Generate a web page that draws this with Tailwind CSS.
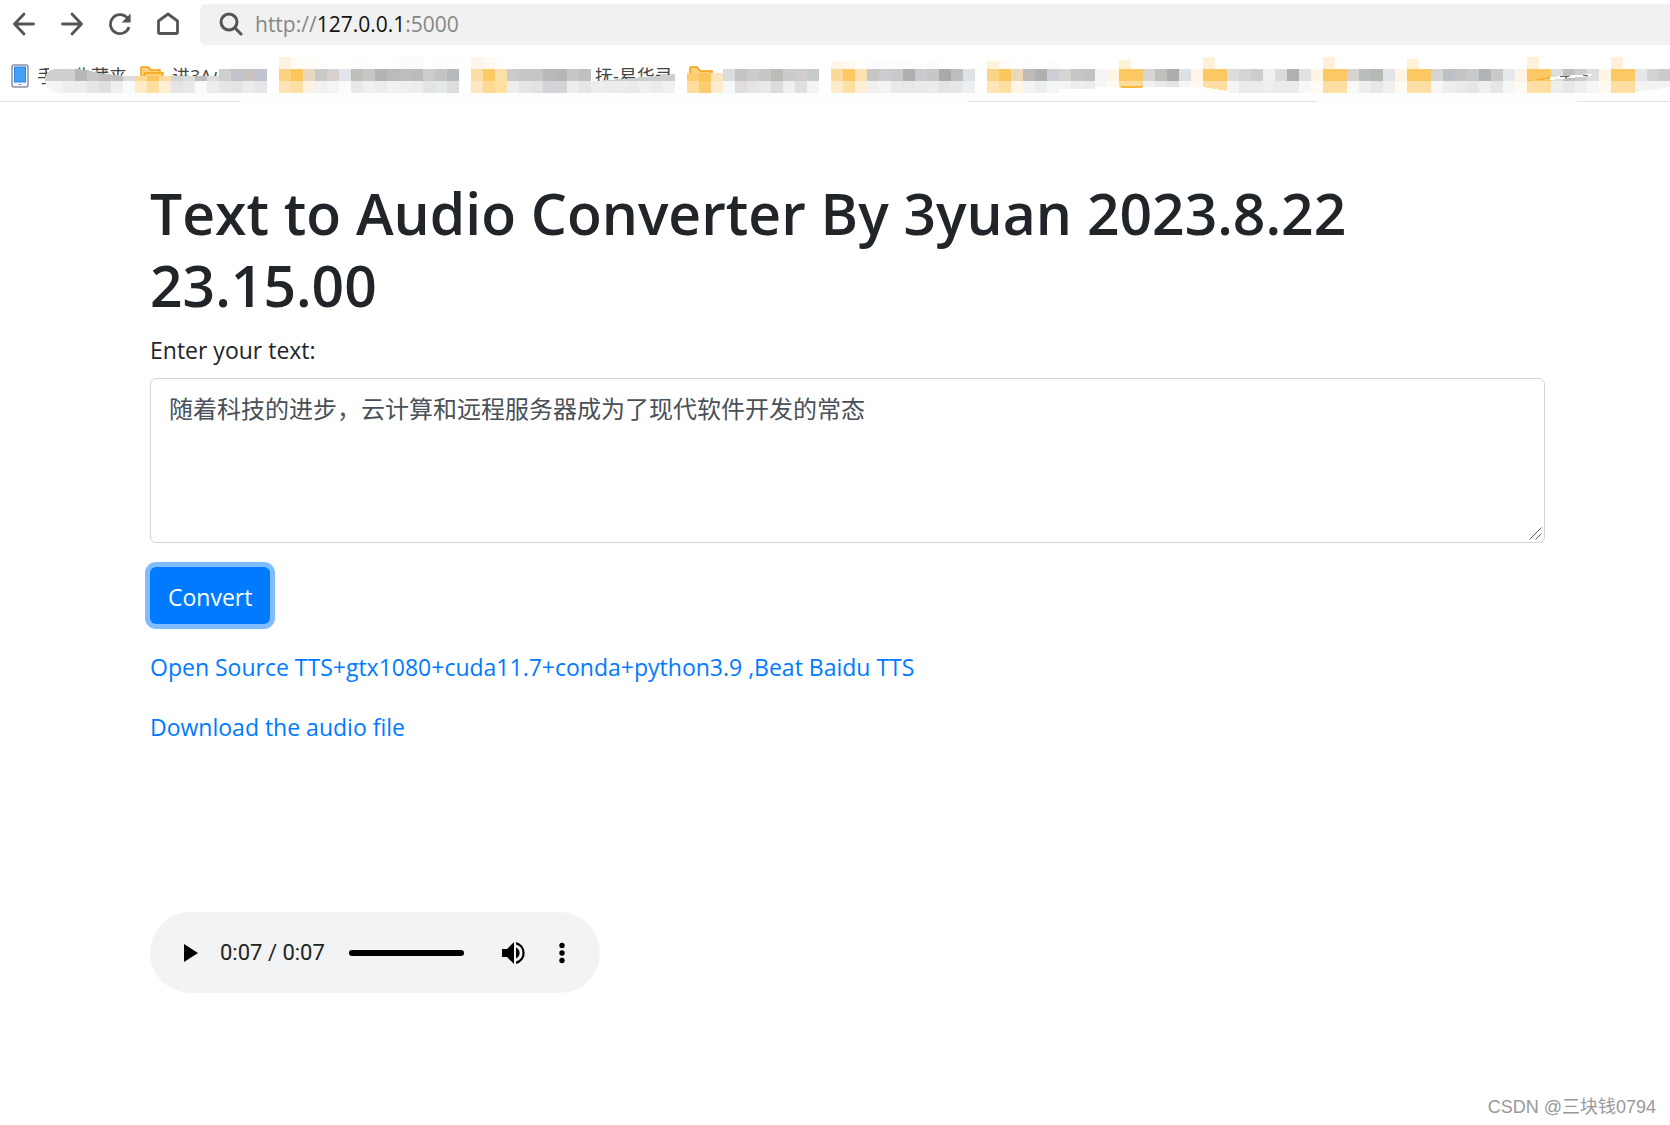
<!DOCTYPE html>
<html lang="en">
<head>
  <meta charset="UTF-8" />
  <meta name="viewport" content="width=device-width, initial-scale=1.0"/>
  <title>Text to Audio Converter</title>
  <script src="https://cdn.jsdelivr.net/npm/@tailwindcss/browser@4"></script>
</head>
<body class="relative min-h-screen overflow-x-hidden bg-white text-[23px] leading-9 text-[#212529] font-['Open_Sans','Noto_Sans_CJK_SC',sans-serif]">

  <!-- Browser toolbar -->
  <header class="relative h-[102px] border-b border-[#e2e4e4]">
    <div class="flex h-12 items-center pl-3 text-[#555]">
      <button type="button" aria-label="Back" class="mr-6 h-6 w-6">
        <svg viewBox="0 0 24 24" class="h-6 w-6" fill="none" stroke="currentColor" stroke-width="2.8" stroke-linecap="round" stroke-linejoin="round"><path d="M21.5 12H2.5M12 2L2.5 12l9.500 10"/></svg>
      </button>
      <button type="button" aria-label="Forward" class="mr-6 h-6 w-6">
        <svg viewBox="0 0 24 24" class="h-6 w-6" fill="none" stroke="currentColor" stroke-width="2.8" stroke-linecap="round" stroke-linejoin="round"><path d="M2.5 12h19M12 2l9.500 10-9.500 10"/></svg>
      </button>
      <button type="button" aria-label="Reload" class="mr-6 h-6 w-6">
        <svg viewBox="0 0 24 24" class="h-6 w-6" fill="none" stroke="currentColor" stroke-width="2.8"><path d="M20 7A9.500 9.500 0 1 0 21 15"/><path d="M22.6 1.500v9h-9z" fill="currentColor" stroke="none"/></svg>
      </button>
      <button type="button" aria-label="Home" class="mr-5 h-6 w-6">
        <svg viewBox="0 0 24 24" class="h-6 w-6" fill="none" stroke="currentColor" stroke-width="2.8" stroke-linejoin="round"><path d="M2.5 9L12 2l9.500 7v11q0 1.500-1.500 1.500H4q-1.500 0-1.500-1.500z"/></svg>
      </button>
      <div class="flex h-[41px] flex-1 items-center gap-3 rounded-l-md bg-[#f1f1f1] pl-[19px]">
        <svg viewBox="0 0 24 24" class="h-6 w-6" fill="none" stroke="currentColor" stroke-width="3" stroke-linecap="round"><circle cx="10" cy="10" r="8"/><path d="M16 16l6 6"/></svg>
        <div class="text-[21px] leading-8 text-[#868686]">http://<span class="text-[#111]">127.0.0.1</span>:5000</div>
      </div>
    </div>

    <!-- Bookmarks bar -->
    <nav class="flex h-[53px] items-center pl-[11px] pt-[3px] text-lg leading-6 text-[#444]">
      <svg viewBox="0 0 18 24" class="h-6 w-[18px]"><rect x="1" y="1" width="16" height="22" rx="2" fill="#f4f6fa" stroke="#8b93a7" stroke-width="1.5"/><rect x="3.5" y="3" width="11" height="15" fill="#45a1f7" stroke="#2f86e0"/><path d="M7.5 20.500h3" stroke="#8b93a7"/></svg>
      <a href="#" class="ml-2 w-[103px] whitespace-nowrap">手机收藏夹</a>
      <svg viewBox="0 0 24 20" class="h-5 w-6" fill="#fdd27a" stroke="#f59e0b" stroke-width="1.5"><path d="M1 18V2q0-1 1-1h6l3 3h9v3"/><path d="M1 18L5 7h18l-3 11z"/></svg>
      <a href="#" class="ml-2 w-[423px] whitespace-nowrap">进3A小</a>
      <a href="#" class="w-[94px] whitespace-nowrap">抚-易华录</a>
      <svg viewBox="0 0 24 20" class="h-5 w-6" fill="#fdd27a" stroke="#f59e0b" stroke-width="1.5"><path d="M1 18V2q0-1 1-1h6l3 4h12v13z"/></svg>
    </nav>

    <!-- Mosaic over the private bookmarks -->
    <svg id="mosaic" class="pointer-events-none absolute left-0 top-0 h-[106px] w-[1680px]" viewBox="0 0 1680 106" shape-rendering="crispEdges" aria-hidden="true"></svg>
  </header>

  <main class="pl-[150px] pr-[125px] pt-[75px]">
    <h1 class="mb-[11px] text-[57px] leading-[72px] font-semibold">Text to Audio Converter By 3yuan 2023.8.22 23.15.00</h1>
    <form onsubmit="return false">
      <label for="text" class="mb-[10px] block">Enter your text:</label>
      <div class="relative">
        <textarea id="text" name="text" class="block h-[165px] w-full resize-none rounded-md border border-[#ced4da] px-[18px] py-3 text-2xl leading-9 text-[#495057]">随着科技的进步，云计算和远程服务器成为了现代软件开发的常态</textarea>
        <svg viewBox="0 0 13 13" class="pointer-events-none absolute bottom-[3px] right-[3px] h-[13px] w-[13px]" fill="none" stroke="#555" aria-hidden="true"><path d="M0.5 12.500l12-12M6.5 12.500l6-6"/></svg>
      </div>
      <button type="submit" class="mt-6 h-[57px] rounded-md bg-[#007bff] px-[18px] pt-[2px] text-white ring-[5px] ring-[#80bdff]">Convert</button>
    </form>
    <div class="mt-[25px] flex flex-col items-start gap-6 text-[#007bff]">
      <a href="#">Open Source TTS+gtx1080+cuda11.7+conda+python3.9 ,Beat Baidu TTS</a>
      <a href="#">Download the audio file</a>
    </div>

    <!-- Audio player -->
    <div class="mt-[167px] flex h-[81px] w-[450px] items-center rounded-full bg-[#f1f3f4] pl-[30px] text-black">
      <button type="button" aria-label="Play" class="h-6 w-6">
        <svg viewBox="0 0 24 24" class="h-6 w-6" fill="currentColor"><path d="M4 3v18l14-9z"/></svg>
      </button>
      <span class="ml-4 w-[129px] text-[22px] text-[#222] font-['Roboto',sans-serif]">0:07 / 0:07</span>
      <input type="range" aria-label="Position" min="0" max="100" value="98" class="h-[6px] w-[115px] appearance-none rounded-full bg-black [&::-webkit-slider-thumb]:appearance-none">
      <button type="button" aria-label="Mute" class="ml-[38px] h-6 w-6">
        <svg viewBox="0 0 24 24" class="h-6 w-6" fill="currentColor"><path d="M0 8v8h5l7 7V1L5 8zM14 6.500v11a6 6 0 0 0 0-11zM14 1v2.600a8.700 8.700 0 0 1 0 16.800V23a11.300 11.300 0 0 0 0-22z"/></svg>
      </button>
      <button type="button" aria-label="More options" class="ml-6 h-6 w-6">
        <svg viewBox="0 0 24 24" class="h-6 w-6" fill="currentColor"><circle cx="12" cy="4.5" r="2.7"/><circle cx="12" cy="12" r="2.7"/><circle cx="12" cy="19.5" r="2.7"/></svg>
      </button>
    </div>
  </main>

  <div class="absolute bottom-1 right-[14px] text-lg leading-7 text-[#999] font-['Liberation_Sans','Noto_Sans_CJK_SC',sans-serif]">CSDN @三块钱0794</div>

  <script>
    const svg = document.getElementById('mosaic');

    function shape(tag, attrs) {
      const el = document.createElementNS('http://www.w3.org/2000/svg', tag);
      for (const key in attrs) el.setAttribute(key, attrs[key]);
      svg.appendChild(el);
    }

    // One row of 12px wide cells, "-" skips a cell
    function strip(x, y, h, colors) {
      colors.split(' ').forEach((c, i) => {
        if (c !== '-') shape('rect', { x: x + i * 12, y: y, width: 12, height: h, fill: '#' + c });
      });
    }

    // Faint wash that hides parts of the border
    shape('rect', { x: 240, y: 93, width: 727, height: 11, fill: '#fbfefd' });
    shape('rect', { x: 1317, y: 93, width: 260, height: 11, fill: '#fbfefd' });
    shape('rect', { x: 60, y: 93, width: 180, height: 4, fill: '#fbfefd' });

    // Wiped parts of the names
    shape('path', { d: 'M49 60h27v10H49z', fill: '#ffffff' });
    shape('path', { d: 'M216 60h20v10h-20z', fill: '#ffffff' });
    shape('path', { d: 'M708 75l20-7v8z', fill: '#ffffff' });

    // Upper row
    strip(279, 57, 12, 'fff1e0 fffcf8 fffdfa - - - fdfdfd - - - fbfbfb fbfbfb - fdfdfd fdfdfd - fff6ea fff9f0 fffefe');
    strip(831, 61, 8, 'fff5e9 fff9f0 - fcfcfc fcfcfc fcfcfc fcfcfc - fbfbfb - - - - fff1dc fffcf8 - fdfdfd - fcfcfc');
    strip(1119, 60, 9, 'fff0d8');
    strip(1203, 57, 12, 'fff0d8');
    strip(1323, 57, 12, 'fff0d8');
    strip(1407, 59, 10, 'fff0d8');
    strip(1527, 57, 12, 'fff0d8');
    strip(1611, 57, 12, 'fff0d8');

    // Middle row
    shape('path', { d: 'M45 81q0-12 12-12h18v12z', fill: '#cfcfcf' });
    shape('path', { d: 'M75 69l12 1v11H75z', fill: '#b7b7b7' });
    shape('path', { d: 'M87 70l12 3v8H87z', fill: '#c6c6c6' });
    shape('path', { d: 'M99 73l24 3v5H99z', fill: '#bfbfbf' });
    strip(123, 76, 5, 'dcdcda fbd98f f9c55c fbdca0 d5d5d5 dcdcdc bdbdbd dddddd');
    strip(219, 69, 12, 'cfd0ce c0c3cb c9c3c0 bfc4cf');
    strip(279, 69, 12, 'fbd183 fbc65b e9d8be c9c9ca d7d2cf e2e5ed bebebb c6c6c6 b2b4b5 bbbab8 bcbdbd b9bcba cecccb c5c3c5 b5babd - fbdda5 fbc966 fbdfa8 cbcbca c7c6c7 c7c6c7 b8b9b9 b6b6b6 c6c6c6 bfc0c0');
    shape('path', { d: 'M595 81q30-2 80-7v7z', fill: '#cccfce' });
    strip(687, 73, 8, 'fbcc70 fbc55a fbe5bd');
    strip(723, 69, 12, 'dadddd c4c2c2 cbccce c5c6c8 bcbbb8 cacbcc d0cdcc c6cbcb - fbd998 fbc861 fce2b3 c6c6c5 cbccd0 c9c9ca aeafae cacbcf c7c7c8 a9a9a7 bebebd dee2e6');
    strip(987, 69, 12, 'fbd386 fbc65b ead8bb bebab7 afb1b1 cdced3 d7d5d4 c4c6c8 c4c3c2 f4f5f6 fff5e6 fbc864 fbc864 d5d5d4 bfbfbc adacaa dde1e5 fff5e6 fbc864 fbc864 dcdcdb d3d6d5 cdcdcd eff0f0 dadbdb b1b0ae e0e1e3 fff5e6 fbc864 fbc864 d5d4d0 b8bdbe b8b8b7 e2e5e8 fff5e6 fbc864 fbc864 d5d5d2 bdc0c2 c4c4c4 c8c9cb b0b4b7 c9c9c9 e8e9eb fff5e6 fbc864 fbc864 dedede bfbfbf cdcdcd dedede fff5e6 fbc864 fbc864 e6e7e8 d3d3d3 cacaca');

    // Lower row
    shape('path', { d: 'M45 81h18v12q-16 0-18-12z', fill: '#f5f5f3' });
    strip(63, 81, 12, 'eeeeec ededec e5e5e5 dde0df efefef f8fbfc fdeac6 fdde9c feeed3 e3e4e5 e8e8e8 f8fafc ebebeb e6e6e6 e4e4e5 ececec e4e6ea');
    strip(279, 81, 12, 'fde3b3 fde0a1 fdf2e1 f2f0f2 f4f4f4 fafbfd e8e8e8 f0f1ef ebeeed f2f2f2 efefef ededed e3e4e3 e5e9e8 dddddd - fce7c2 fdd994 fddf9f ededed e6e6e6 e4e2e0 d2d4d7 d2d4d8 eeeeee e6e6e6 ededec ebebeb ececec e9eaea efefef ecebea f0f1f4');
    strip(687, 81, 12, 'fddc9c fbcd70 fdedd0 f7f8f8 e0dddc e5e4e2 e8e9ea d9dbdd efefee e0dfe0 f4f4f4 - fdebc9 fddfa1 feeed6 f0f0ee f4f5f3 e9e9ea e8e8e8 eaeaea ebebeb e4e4e4 e8e7e5 ecf0f3');
    strip(987, 81, 12, 'fde5b6 fde0a1 fff6e8 f3f3f3 eeeeee f3f6f6');
    strip(1059, 81, 8, 'f4f5f3 eeeeee ececec');
    strip(1095, 81, 6, 'f4f5f6 fff9f0 fcdd9c fcdd9c f0f0f0 e9e9e9 e4e4e4 f5f6f7 fff9f0');
    shape('path', { d: 'M1119 86h24q-1 2-4 2h-16q-3 0-4-2z', fill: '#fbb93c' });
    shape('path', { d: 'M1203 81h24v10l-24-4z', fill: '#fddfa3' });
    strip(1227, 81, 12, 'f5f5f5 eaeaea ececec eeeeee ebebeb ebebeb f7f9f8 fffaf2 fddfa3 fddfa3 f7f8f7 eeeeed e6e8e7 f0f0f0 fffaf2 fddfa3 fddfa3 f5f7f7 ededec eaeaea e6e6e6 eef0f0 e6e6e6 f5f6f6 fff9f0 fddfa3 fddfa3 eeeeee e8e8e8 efefef f5f6f6 fff9f0 fddfa3 fddfa3');
    shape('path', { d: 'M1635 81h35v6l-35 5z', fill: '#f3f3f3' });

    // Uncovered sliver of a folder and its name
    shape('path', { d: 'M1526 81l24-4v2z', fill: '#fbb03b' });
    shape('path', { d: 'M1550 77l42-3-2 2-40 4z', fill: '#ffffff' });
    shape('path', { d: 'M1560 76h9l-4 2M1583 75h5', fill: 'none', stroke: '#666' });
  </script>
</body>
</html>
